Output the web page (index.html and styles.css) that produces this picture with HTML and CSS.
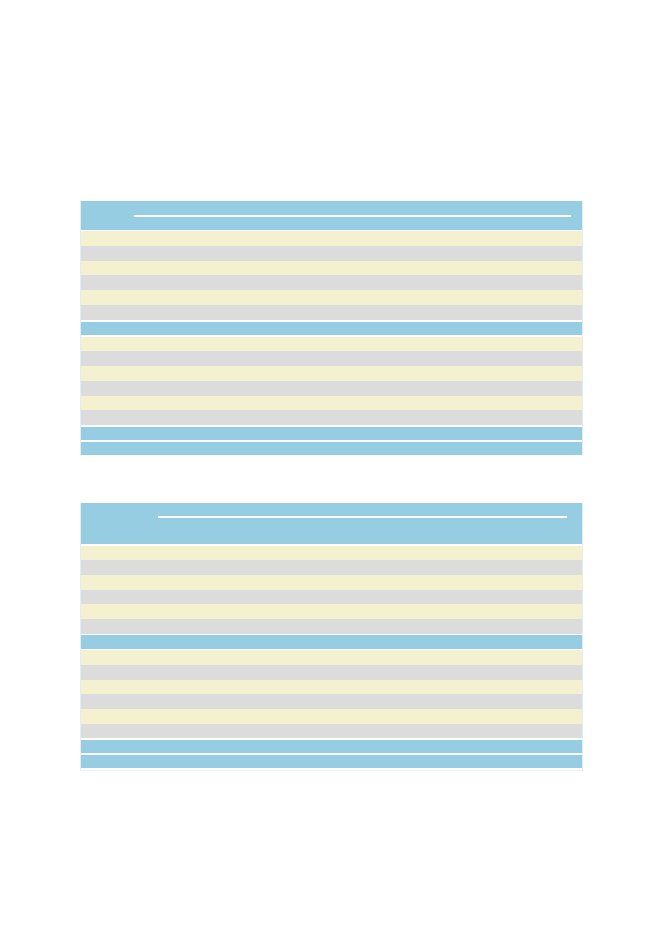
FILE: index.html
```html
<!DOCTYPE html>
<html lang="en">
<head>
<meta charset="utf-8">
<title>Tables</title>
<link rel="stylesheet" href="styles.css">
</head>
<body>
<div class="page">
  <div class="table t1">
    <div class="head head-1"><div class="span-line line-1"></div></div>
    <div class="group g1a">
      <div class="row y"></div><div class="row g"></div>
      <div class="row y"></div><div class="row g"></div>
      <div class="row y"></div><div class="row g"></div>
    </div>
    <div class="blue b1a"></div>
    <div class="group g1b">
      <div class="row y"></div><div class="row g"></div>
      <div class="row y"></div><div class="row g"></div>
      <div class="row y"></div><div class="row g"></div>
    </div>
    <div class="blue b1b"></div>
    <div class="blue b1c"></div>
  </div>

  <div class="table t2">
    <div class="head head-2"><div class="span-line line-2"></div></div>
    <div class="group g2a">
      <div class="row y"></div><div class="row g"></div>
      <div class="row y"></div><div class="row g"></div>
      <div class="row y"></div><div class="row g"></div>
    </div>
    <div class="blue b2a"></div>
    <div class="group g2b">
      <div class="row y"></div><div class="row g"></div>
      <div class="row y"></div><div class="row g"></div>
      <div class="row y"></div><div class="row g"></div>
    </div>
    <div class="blue b2b"></div>
    <div class="blue b2c"></div>
    <div class="foot-line"></div>
  </div>
</div>
</body>
</html>
```
FILE: styles.css
```css
html, body {
  margin: 0;
  padding: 0;
  background: #ffffff;
  font-family: "Liberation Sans", Arial, sans-serif;
}

.page {
  padding-left: 80px;
  display: flex;
  flex-direction: column;
}

.table {
  width: 501px;
  border-left: 1px solid #e2edf2;
  border-right: 1px solid #e2edf2;
  display: flex;
  flex-direction: column;
  background: #ffffff;
}

.t1 { margin-top: 201px; }
.t2 { margin-top: 48px; }

.head {
  background: #97cde3;
  display: flex;
  flex-direction: column;
}

.head-1 { height: 28.5px; }
.head-2 { height: 40.7px; }

.span-line {
  height: 1.6px;
  background: #ffffff;
}

.line-1 {
  margin-top: 14.3px;
  margin-left: 53px;
  margin-right: 11px;
}

.line-2 {
  margin-top: 13.3px;
  margin-left: 77px;
  margin-right: 15px;
}

.group {
  display: flex;
  flex-direction: column;
}

.g1a { margin-top: 1.3px; }
.g1a .row { height: 14.88px; }
.g1b { margin-top: 2px; }
.g1b .row { height: 14.72px; }
.g2a { margin-top: 2px; }
.g2a .row { height: 14.67px; }
.g2b { margin-top: 1.3px; }
.g2b .row { height: 14.67px; }

.row.y { background: #f4f1d1; }
.row.g { background: #dcdcdc; }

.blue { background: #97cde3; }

.b1a { margin-top: 1.7px; height: 13px; }
.b1b { margin-top: 2px; height: 12.7px; }
.b1c { margin-top: 2.3px; height: 13px; }

.b2a { margin-top: 1.6px; height: 13.7px; }
.b2b { margin-top: 1.7px; height: 13.3px; }
.b2c { margin-top: 1.7px; height: 13.3px; }

.foot-line {
  margin-top: 1.7px;
  height: 1px;
  background: #edf4f7;
}
```
